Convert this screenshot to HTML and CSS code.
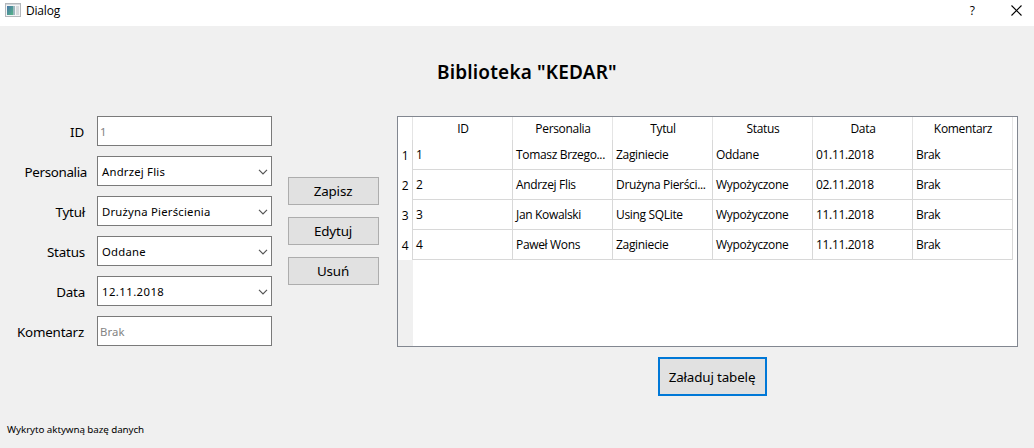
FILE: index.html
```html
<!DOCTYPE html>
<html lang="pl">
<head>
<meta charset="utf-8">
<title>Dialog</title>
<link rel="stylesheet" href="styles.css">
</head>
<body>
<header class="titlebar">
  <svg class="app-icon" width="16" height="14" viewBox="0 0 16 14">
    <defs><linearGradient id="pane" x1="0" y1="0" x2="1" y2="1"><stop offset="0" stop-color="#4775a8"/><stop offset="1" stop-color="#55b586"/></linearGradient></defs>
    <rect x="0.5" y="0.5" width="15" height="13" fill="#f3f4f5" stroke="#b4b8bc"/>
    <rect x="1" y="1" width="14" height="1" fill="#d4d8dc"/>
    <rect x="2" y="3" width="6" height="9" fill="url(#pane)"/>
    <rect x="8" y="3" width="2" height="9" fill="#9db9bf"/>
    <rect x="11" y="3" width="3" height="9" fill="#d5d9dc"/>
  </svg>
  <span class="window-title">Dialog</span>
  <span class="help">?</span>
  <svg class="close" width="11" height="11" viewBox="0 0 11 11"><path d="M.5.5l10 10M10.5.5l-10 10" stroke="#000" stroke-width="1.1"/></svg>
</header>
<h1 class="heading">Biblioteka "KEDAR"</h1>
<main class="content">
  <form class="fields">
    <label class="label inset">ID</label><div class="field disabled">1</div>
    <label class="label wide">Personalia</label><div class="field combo"><span>Andrzej Flis</span><svg class="chevron" width="10" height="6" viewBox="0 0 10 6"><path d="M1 .8l4 4 4-4"/></svg></div>
    <label class="label">Tytuł</label><div class="field combo"><span>Drużyna Pierścienia</span><svg class="chevron" width="10" height="6" viewBox="0 0 10 6"><path d="M1 .8l4 4 4-4"/></svg></div>
    <label class="label">Status</label><div class="field combo"><span>Oddane</span><svg class="chevron" width="10" height="6" viewBox="0 0 10 6"><path d="M1 .8l4 4 4-4"/></svg></div>
    <label class="label">Data</label><div class="field combo date"><span>12.11.2018</span><svg class="chevron" width="10" height="6" viewBox="0 0 10 6"><path d="M1 .8l4 4 4-4"/></svg></div>
    <label class="label inset">Komentarz</label><div class="field disabled">Brak</div>
  </form>
  <div class="actions">
    <button class="button">Zapisz</button>
    <button class="button">Edytuj</button>
    <button class="button">Usuń</button>
  </div>
  <section class="records">
    <div class="table-view">
      <div class="row head"><span class="num"></span><span>ID</span><span>Personalia</span><span>Tytul</span><span>Status</span><span>Data</span><span>Komentarz</span></div>
      <div class="row"><span class="num">1</span><span>1</span><span>Tomasz Brzego...</span><span>Zaginiecie</span><span>Oddane</span><span>01.11.2018</span><span>Brak</span></div>
      <div class="row"><span class="num">2</span><span>2</span><span>Andrzej Flis</span><span>Drużyna Pierści...</span><span>Wypożyczone</span><span>02.11.2018</span><span>Brak</span></div>
      <div class="row"><span class="num">3</span><span>3</span><span>Jan Kowalski</span><span>Using SQLite</span><span>Wypożyczone</span><span>11.11.2018</span><span>Brak</span></div>
      <div class="row"><span class="num">4</span><span>4</span><span>Paweł Wons</span><span>Zaginiecie</span><span>Wypożyczone</span><span>11.11.2018</span><span>Brak</span></div>
      <div class="gutter"></div>
    </div>
    <button class="button load">Załaduj tabelę</button>
  </section>
</main>
<footer class="status">Wykryto aktywną bazę danych</footer>
</body>
</html>
```
FILE: styles.css
```css
* { box-sizing: border-box; }
body {
  margin: 0;
  width: 1034px;
  height: 448px;
  overflow: hidden;
  background: #f0f0f0;
  color: #000;
  font: 12px/16px "Open Sans", "Noto Sans", sans-serif;
}
.titlebar {
  display: flex;
  height: 26px;
  padding: 0 12px 5px 5px;
  align-items: center;
  background: #fff;
}
.app-icon { margin-top: -2px; }
.window-title { margin-left: 5px; letter-spacing: -0.2px; }
.help { margin-left: auto; margin-right: 36px; font-weight: 500; }
.close { margin-top: -1px; }
.heading {
  margin: 33px 0 0 437px;
  font: 600 19px/26px "Noto Sans", sans-serif;
  letter-spacing: 0.16px;
  white-space: nowrap;
}
.content { display: flex; height: 281px; margin-top: 31px; }
.fields {
  display: grid;
  grid-template-columns: 87px 175px;
  grid-auto-rows: 30px;
  gap: 10px;
  align-content: start;
}
.label {
  padding-right: 2px;
  text-align: right;
  font: 13.4px/32px "Noto Sans", sans-serif;
  letter-spacing: -0.2px;
}
.label.wide { padding-right: 0; letter-spacing: -0.35px; }
.label.inset { padding-right: 3px; }
.field {
  display: flex;
  align-items: center;
  padding: 1px 2px 0;
  border: 1px solid #7a7a7a;
  background: #fff;
  font: 11.3px/16px "Noto Sans", sans-serif;
  letter-spacing: 0.1px;
  white-space: nowrap;
}
.disabled { color: #838383; }
.combo { justify-content: space-between; padding: 1px 3px 0 4px; letter-spacing: 0.22px; }
.date { letter-spacing: 0.45px; }
.chevron path { fill: none; stroke: #555; stroke-width: 1.2; }
.actions { display: flex; flex-direction: column; gap: 12px; margin: 61px 0 0 16px; }
.button {
  width: 91px;
  height: 28px;
  padding: 0 1px 0 0;
  border: 1px solid #adadad;
  background: #e1e1e1;
  color: #000;
  font: 13.4px/20px "Noto Sans", sans-serif;
  letter-spacing: -0.15px;
}
.records { display: flex; flex-direction: column; margin-left: 18px; }
.table-view {
  display: flex;
  flex-direction: column;
  width: 621px;
  height: 231px;
  border: 1px solid #828790;
  background: #fff;
}
.row {
  display: grid;
  grid-template-columns: 15px repeat(6, 100px);
  height: 30px;
  line-height: 30px;
  letter-spacing: -0.33px;
}
.row span {
  height: 30px;
  padding-left: 3px;
  border-right: 1px solid #d8d8d8;
  border-bottom: 1px solid #d8d8d8;
  white-space: nowrap;
}
.row .num { padding: 1px 0 0; border-bottom: 0; text-align: center; }
.row.head { height: 23px; line-height: 23px; }
.row.head span { height: 23px; padding: 0 0 0 1px; border-bottom: 0; border-color: #e5e5e5; text-align: center; }
.gutter { flex: 1; width: 15px; background: #f0f0f0; }
.load {
  width: 109px;
  height: 39px;
  margin: 10px 0 0 261px;
  border: 2px solid #0078d7;
}
.status {
  margin: 25px 0 0 7px;
  font: 9.8px/16px "Noto Sans", sans-serif;
  letter-spacing: -0.07px;
}
```
